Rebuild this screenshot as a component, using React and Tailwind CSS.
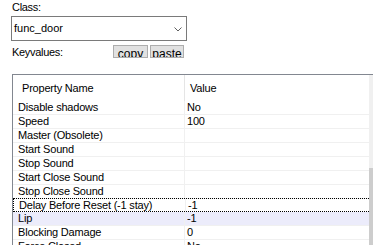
import React from 'react';

const rows = [
  { name: 'Disable shadows', value: 'No' },
  { name: 'Speed', value: '100' },
  { name: 'Master (Obsolete)', value: '' },
  { name: 'Start Sound', value: '' },
  { name: 'Stop Sound', value: '' },
  { name: 'Start Close Sound', value: '' },
  { name: 'Stop Close Sound', value: '' },
  { name: 'Delay Before Reset (-1 stay)', value: '-1', focused: true },
  { name: 'Lip', value: '-1', selected: true },
  { name: 'Blocking Damage', value: '0' },
  { name: 'Force Closed', value: 'No' },
];

function Row({ row }) {
  let cls = 'flex h-[14px] border-b border-[#f0f0f0]';
  if (row.selected) cls += ' bg-[#ececfb]';
  if (row.focused) cls = 'flex h-[14px] -mt-px border-y border-l border-dotted border-black';
  return (
    <div className={cls}>
      <div className="w-[172px] shrink-0 border-r border-[#f0f0f0] pl-[5px] leading-[13px] whitespace-nowrap">{row.name}</div>
      <div className="flex-1 pl-[2px] leading-[13px]">{row.value}</div>
    </div>
  );
}

export default function App() {
  return (
    <div
      className="w-[373px] h-[245px] overflow-hidden bg-white text-black pl-[11px] text-[11px]"
      style={{ fontFamily: '"Liberation Sans", Arial, sans-serif' }}
    >
      {/* class selector */}
      <div className="pt-[1px] pl-[1px] leading-[13px] tracking-[-0.3px]">Class:</div>
      <div className="mt-[2px] w-[176px] h-[25px] border border-[#7a7a7a] flex items-center justify-between pl-[2px] pr-[4px]">
        <span className="leading-[13px]">func_door</span>
        <svg width="8" height="5" viewBox="0 0 8 5" className="mt-[2px]">
          <path d="M0.5 0.5 L4 4 L7.5 0.5" fill="none" stroke="#606060" strokeWidth="1" />
        </svg>
      </div>

      {/* keyvalues row */}
      <div className="mt-[4px] flex items-end h-[13px] pl-[1px]">
        <span className="w-[101px] leading-[13px] tracking-[-0.3px] translate-y-[1px]">Keyvalues:</span>
        <button className="w-[35px] h-[13px] overflow-hidden border border-[#adadad] bg-[#e1e1e1] text-[12px] leading-[12px] pt-[2px] text-center">copy</button>
        <button className="ml-[2px] w-[34px] h-[13px] overflow-hidden border border-[#adadad] bg-[#e1e1e1] text-[12px] leading-[12px] pt-[2px] text-center">paste</button>
      </div>

      {/* property grid */}
      <div className="mt-[16px] ml-[1px] w-[380px] flex border-t border-l border-[#828790] tracking-[-0.2px]">
        <div className="w-[356px] shrink-0">
          <div className="flex h-[26px] items-center">
            <div className="w-[172px] h-full shrink-0 border-r border-[#e5e5e5] pl-[9px] flex items-center">Property Name</div>
            <div className="pl-[5px]">Value</div>
          </div>
          {rows.map((row) => (
            <Row key={row.name} row={row} />
          ))}
        </div>
        <div className="w-[17px] shrink-0 bg-[#f0f0f0] flex flex-col">
          <div className="h-[93px]"></div>
          <div className="flex-1 bg-[#cdcdcd]"></div>
        </div>
      </div>
    </div>
  );
}
